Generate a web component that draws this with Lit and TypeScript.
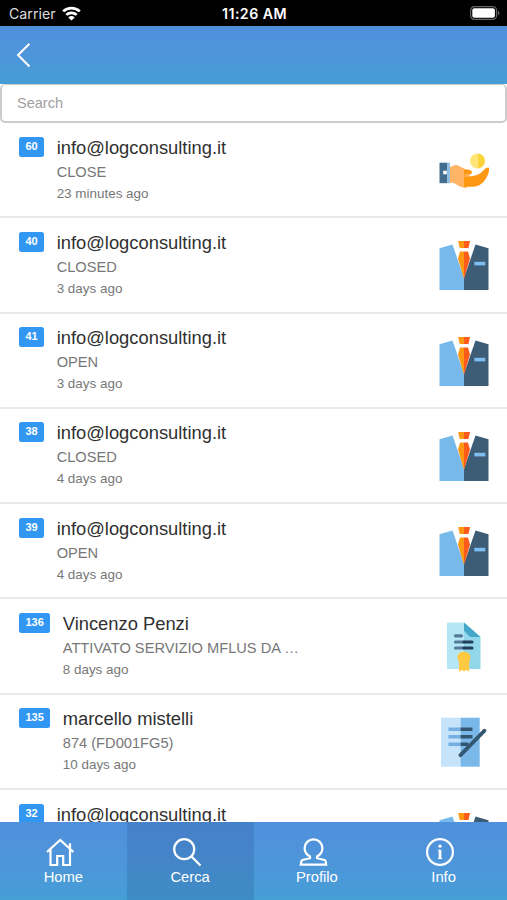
import { LitElement, html, css, svg, nothing } from "lit";
import { customElement, property } from "lit/decorators.js";

type Kind = "hand" | "suit" | "certificate" | "note";

interface Ticket {
  id: number;
  name: string;
  detail?: string;
  when?: string;
  kind: Kind;
}

const tickets: Ticket[] = [
  { id: 60, name: "info@logconsulting.it", detail: "CLOSE", when: "23 minutes ago", kind: "hand" },
  { id: 40, name: "info@logconsulting.it", detail: "CLOSED", when: "3 days ago", kind: "suit" },
  { id: 41, name: "info@logconsulting.it", detail: "OPEN", when: "3 days ago", kind: "suit" },
  { id: 38, name: "info@logconsulting.it", detail: "CLOSED", when: "4 days ago", kind: "suit" },
  { id: 39, name: "info@logconsulting.it", detail: "OPEN", when: "4 days ago", kind: "suit" },
  { id: 136, name: "Vincenzo Penzi", detail: "ATTIVATO SERVIZIO MFLUS DA …", when: "8 days ago", kind: "certificate" },
  { id: 135, name: "marcello mistelli", detail: "874 (FD001FG5)", when: "10 days ago", kind: "note" },
  { id: 32, name: "info@logconsulting.it", kind: "suit" },
];

// Row pictures share a 51x52 box.
const pictures = {
  hand: svg`<g transform="translate(.5 7.200)">
    <path d="M9 14.500h3q2-2 6-1.500l7 3.500q4 .5 6 2.500l-4 17q-7-1-12-5l-6-1z" fill="#ffb565"/>
    <path d="M24.500 17.500h5q3 .5 3 3l-1 1.500h-6l1.500 2h5q8-1 12-6 3-3.500 5.500-2.500.8 6-5 13.500-4 5-10.500 5.600h-9.500z" fill="#ff9811"/>
    <path d="M16 20q4 4 9 4.500l3 .5v-1.500l-3.500-.5z" fill="#ffb565"/>
    <path d="M0 10.500h8v20.500H0z" fill="#436d8e"/>
    <path d="M7.500 10.500h3v20.500h-3z" fill="#90bde0"/>
    <rect x="3.700" y="18.500" width="3.600" height="3.600" fill="#fff"/>
    <path d="M38 1.200a7.500 7.500 0 0 0 0 15z" fill="#ffe477"/>
    <path d="M38 1.200a7.500 7.500 0 0 1 0 15z" fill="#fbd43c"/></g>`,
  suit: svg`<g transform="translate(0 .8)">
    <path d="M.5 7.500 13.500 3.800 25 37v12.300H.5z" fill="#78b9eb"/>
    <path d="M36.500 3.800 49.500 7.500v41.800H25V37z" fill="#3d5d77"/>
    <path d="m21 10.700-2 7L25 38V10.700z" fill="#ff9811"/>
    <path d="M25 10.700h4l2 7L25 38z" fill="#ff5c1c"/>
    <path d="M19.200.2H25v7H20.700z" fill="#ff9811"/>
    <path d="M25 .2h6l-1.500 7H25z" fill="#ff5c1c"/>
    <rect x="35.300" y="21" width="11" height="3.600" fill="#7dbdf0"/></g>`,
  certificate: svg`<g transform="translate(0 -1.500)">
    <path d="M8 2h17v46.500H8z" fill="#b5e6f5"/>
    <path d="M25 2 41.500 16.500v32H25z" fill="#93d8ea"/>
    <path d="M25 2 41.500 16.500H31L25 10z" fill="#45a7ca"/>
    <g stroke-width="3.200" stroke-linecap="round">
      <path d="M16.500 15.300h6M16.500 21.500H25M16.500 27.500H25" stroke="#54799a"/>
      <path d="M25 21.500h8M25 27.500h8" stroke="#243e59"/>
    </g>
    <path d="M18.700 38q-1-6.500 6-7 7.300.5 6.500 7l-1 4V51l-3-1.500L25 51l-2-1.500-3 1.500v-9z" fill="#ffca42"/></g>`,
  note: svg`<g transform="translate(0 -.8)">
    <path d="M2 1.500h19.500v49H2z" fill="#c5e3fb"/>
    <path d="M21.500 1.500h19.200v49H21.500z" fill="#7bb8ea"/>
    <path d="M9.500 13h12M9.500 20.500h12M9.500 28h12" stroke="#73afe2" stroke-width="3.500"/>
    <path d="M21.500 13h12M21.500 20.500h12M21.500 28h8" stroke="#345772" stroke-width="3.500"/>
    <path d="M21.500 39 45.500 14.500" stroke="#345772" stroke-width="3.800" stroke-linecap="round"/></g>`,
};

const tabIcons = {
  home: svg`<path d="m2 15 13.200-12 13.200 12M25 11.500V6.200M5.500 12.500V28h6.700v-9h6v9h6.800V12.500"/>`,
  search: svg`<circle cx="12.200" cy="12.200" r="10"/><path d="m19.500 19.500 9 9"/>`,
  profile: svg`<path d="M12 19.500c-3.500-1.800-5.400-5-5.400-8.500a8.900 8.700 0 0 1 17.800 0c0 3.500-1.900 6.700-5.400 8.500v1.700l7.500 1.800q1 .3 1.200 1.500l.5 3.200H2.800l.5-3.200q.2-1.200 1.200-1.500l7.500-1.800z"/>`,
  info: svg`<circle cx="15" cy="15" r="12.900"/><path d="M15 12.800V21.900" stroke-width="2.700"/><path d="M13 13.300h2M13 21.600h4.200" stroke-width="1"/><circle cx="15" cy="9.200" r="1.600" class="dot"/>`,
};

@customElement("ticket-row")
class TicketRow extends LitElement {
  @property({ attribute: false }) ticket!: Ticket;

  static styles = css`
    :host {
      display: flex;
      align-items: flex-start;
      box-sizing: border-box;
      flex: none;
      height: 95.300px;
      padding: 13.500px 17px 0 19px;
      border-bottom: 2px solid #e9e9e9;
    }
    .badge {
      flex: none;
      box-sizing: border-box;
      height: 20px;
      margin-right: 12.400px;
      padding: 0 6.500px;
      border-radius: 2.500px;
      background: #3296f3;
      color: #fff;
      font-size: 11px;
      font-weight: 700;
      line-height: 19px;
    }
    .text {
      flex: 1;
      min-width: 0;
      margin-top: -1px;
      white-space: nowrap;
    }
    .name {
      font-size: 18.350px;
      line-height: 24px;
      color: #303030;
    }
    .detail {
      font-size: 14.650px;
      line-height: 24px;
      color: #777;
    }
    .when {
      font-size: 13.450px;
      line-height: 20px;
      color: #777;
    }
    .picture {
      flex: none;
      align-self: center;
      width: 51px;
      height: 52px;
      margin-bottom: 10.500px;
      overflow: visible;
    }
  `;

  render() {
    const t = this.ticket;
    return html`
      <span class="badge">${t.id}</span>
      <div class="text">
        <div class="name">${t.name}</div>
        ${t.detail ? html`<div class="detail">${t.detail}</div>` : nothing}
        ${t.when ? html`<div class="when">${t.when}</div>` : nothing}
      </div>
      <svg class="picture" viewBox="0 0 51 52">${pictures[t.kind]}</svg>
    `;
  }
}

@customElement("app-root")
class AppRoot extends LitElement {
  static styles = css`
    :host {
      display: flex;
      flex-direction: column;
      height: 900px;
      overflow: hidden;
      background: #fff;
      font-family: "Liberation Sans", Arial, sans-serif;
    }
    .status {
      flex: none;
      display: grid;
      grid-template-columns: 1fr auto 1fr;
      align-items: center;
      height: 25.500px;
      padding: 1px 7px 0 9px;
      box-sizing: border-box;
      background: #000;
      color: #fff;
      font: 600 14.200px Inter, sans-serif;
    }
    .clock {
      letter-spacing: 0.450px;
    }
    .carrier {
      display: flex;
      align-items: center;
      gap: 6px;
      font-weight: 400;
      color: #ddd;
    }
    .battery {
      justify-self: end;
    }
    .bar {
      flex: none;
      display: flex;
      align-items: center;
      height: 58.500px;
      padding: 1px 0 0 16px;
      box-sizing: border-box;
      background: linear-gradient(#4f90dc, #4f94da 40%, #469ed6);
    }
    .search {
      flex: none;
      box-sizing: border-box;
      height: 39px;
      width: 100%;
      margin: 0;
      padding: 0 15px;
      border: 2px solid #ccc;
      border-top-width: 1px;
      border-radius: 5px;
      outline: none;
      font: 14.500px "Liberation Sans", Arial, sans-serif;
      color: #333;
    }
    .search::placeholder {
      color: #a0a0a0;
    }
    .list {
      flex: 1;
      min-height: 0;
      overflow: hidden;
      display: flex;
      flex-direction: column;
    }
    .tabs {
      flex: none;
      display: grid;
      grid-template-columns: repeat(4, 1fr);
      height: 78.500px;
      background: linear-gradient(#4f90dc, #4f94da 40%, #469ed6);
    }
    .tab {
      display: flex;
      flex-direction: column;
      align-items: center;
      padding-top: 15px;
      color: #fff;
      font-size: 14.800px;
      line-height: 20px;
    }
    .tab.active {
      background: rgba(30, 70, 130, 0.2);
    }
    .icon {
      width: 30px;
      height: 30px;
      margin-right: 7px;
      fill: none;
      stroke: #fff;
      stroke-width: 2.200;
    }
    .label {
      margin-top: 0.500px;
    }
    .dot {
      fill: #fff;
      stroke: none;
    }
  `;

  private tab(icon: keyof typeof tabIcons, label: string, active = false) {
    return html`<div class="tab ${active ? "active" : ""}">
      <svg class="icon" viewBox="0 0 30 30">${tabIcons[icon]}</svg>
      <span class="label">${label}</span>
    </div>`;
  }

  render() {
    return html`
      <div class="status">
        <span class="carrier">Carrier
          <svg width="19" height="15" viewBox="0 0 19 15">
            <g fill="none" stroke="#fff" stroke-width="2.700">
              <path d="M1.200 5.400a12 12 0 0 1 16.600 0"/>
              <path d="M4.300 8.900a7.500 7.500 0 0 1 10.400 0"/>
            </g>
            <path d="M6.300 11.400a4.700 4.700 0 0 1 6.400 0L9.500 14.600z" fill="#fff"/>
          </svg>
        </span>
        <span class="clock">11:26 AM</span>
        <svg class="battery" width="30" height="14" viewBox="0 0 30 14">
          <rect x=".6" y=".6" width="26" height="12.800" rx="3.800" fill="none" stroke="#666" stroke-width="1.200"/>
          <rect x="2.300" y="2.300" width="22.600" height="9.400" rx="2" fill="#fff"/>
          <path d="M28 4.500q3 2.500 0 5z" fill="#666"/>
        </svg>
      </div>
      <div class="bar">
        <svg width="15" height="26" viewBox="0 0 15 26">
          <path d="M13.500 1.700 2 13l11.500 11.500" fill="none" stroke="#fff" stroke-width="2"/>
        </svg>
      </div>
      <input class="search" placeholder="Search">
      <div class="list">
        ${tickets.map((t) => html`<ticket-row .ticket=${t}></ticket-row>`)}
      </div>
      <div class="tabs">
        ${this.tab("home", "Home")}
        ${this.tab("search", "Cerca", true)}
        ${this.tab("profile", "Profilo")}
        ${this.tab("info", "Info")}
      </div>
    `;
  }
}
